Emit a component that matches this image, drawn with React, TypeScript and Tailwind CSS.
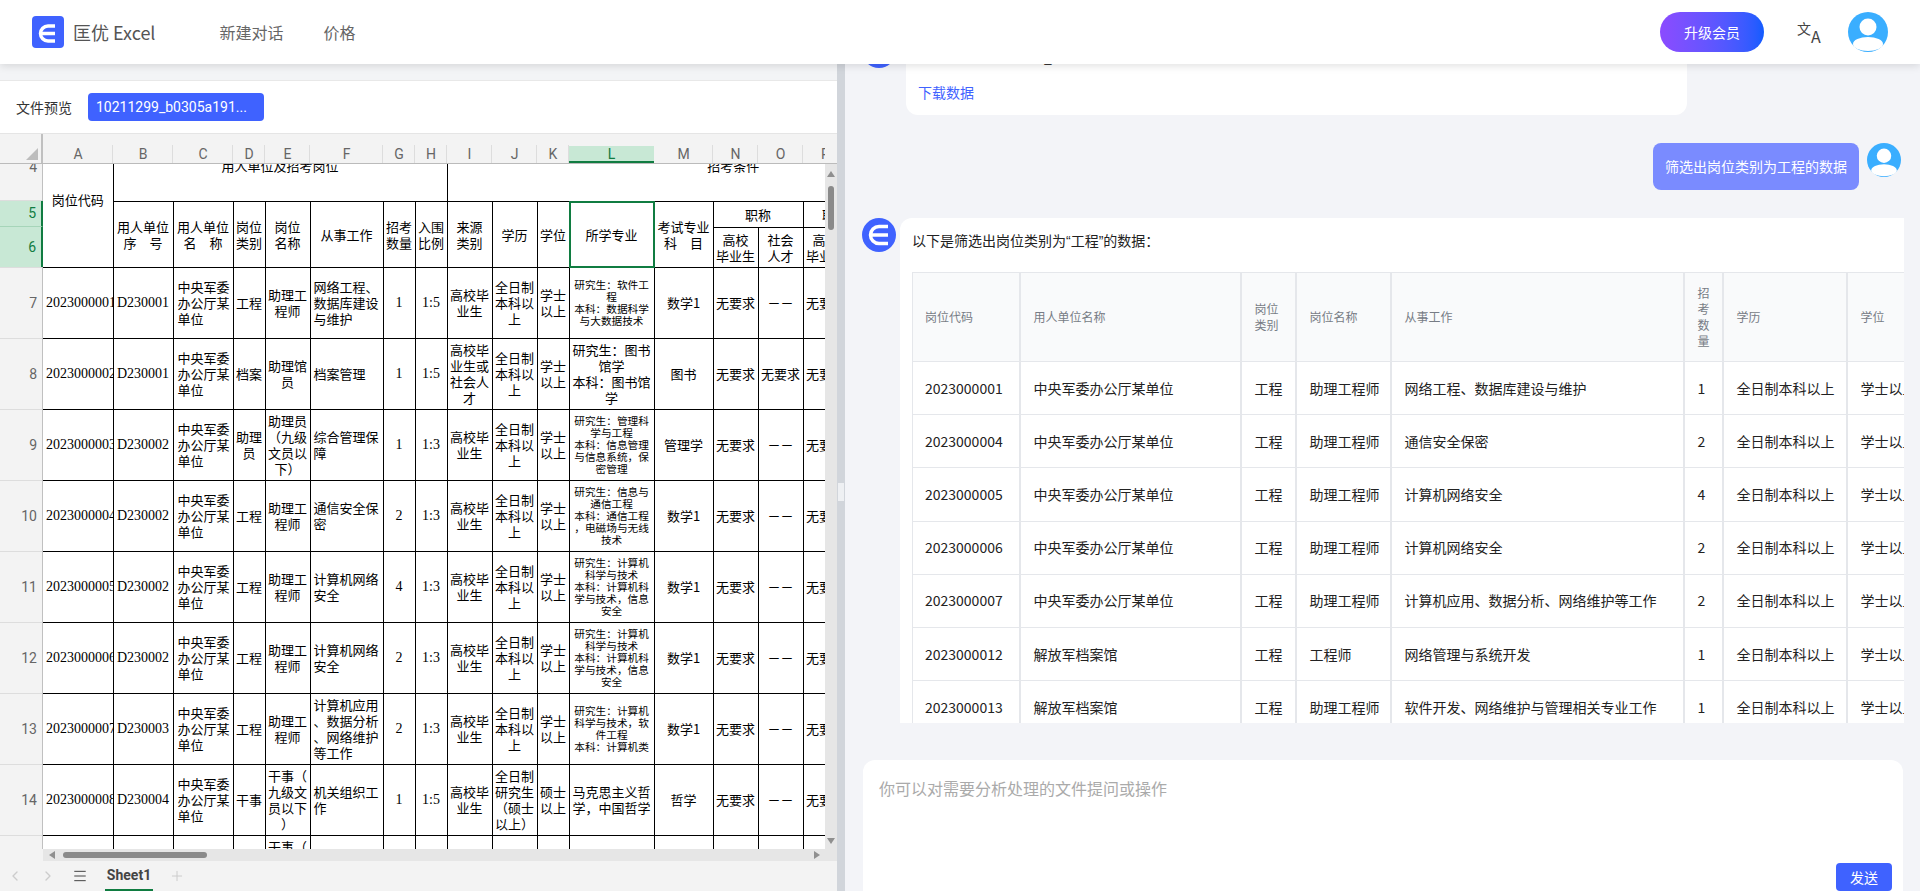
import React from 'react';
import { ChevronLeft, ChevronRight, Menu, Plus } from 'lucide-react';

const COLS = [
  { name: 'A', w: 'w-[70px]' },
  { name: 'B', w: 'w-[60px]' },
  { name: 'C', w: 'w-[60px]' },
  { name: 'D', w: 'w-[32px]' },
  { name: 'E', w: 'w-[45px]' },
  { name: 'F', w: 'w-[73px]' },
  { name: 'G', w: 'w-[32px]' },
  { name: 'H', w: 'w-[32px]' },
  { name: 'I', w: 'w-[45px]' },
  { name: 'J', w: 'w-[45px]' },
  { name: 'K', w: 'w-[32px]' },
  { name: 'L', w: 'w-[85px]' },
  { name: 'M', w: 'w-[59px]' },
  { name: 'N', w: 'w-[45px]' },
  { name: 'O', w: 'w-[45px]' },
  { name: 'P', w: 'w-[45px]' },
  { name: 'Q', w: 'w-[45px]' },
  { name: 'R', w: 'w-[126px]' },
];

const UNIT = '中央军委\n办公厅某\n单位';
const ENG = '助理工\n程师';
const FULL = '全日制\n本科以\n上';
const GRAD = '高校毕\n业生';
const BA = '学士\n以上';
const CS_MAJOR = '研究生：计算机\n科学与技术\n本科：计算机科\n学与技术，信息\n安全';

const SHEET_ROWS = [
  { no: 7, code: '2023000001', dept: 'D230001', type: '工程', title: ENG, work: '网络工程、\n数据库建设\n与维护', num: '1', ratio: '1:5', src: GRAD, edu: FULL, deg: BA, major: '研究生：软件工\n程\n本科：数据科学\n与大数据技术', small: true, exam: '数学1', other: '－－' },
  { no: 8, code: '2023000002', dept: 'D230001', type: '档案', title: '助理馆\n员', work: '档案管理', num: '1', ratio: '1:5', src: '高校毕\n业生或\n社会人\n才', edu: FULL, deg: BA, major: '研究生：图书\n馆学\n本科：图书馆\n学', small: false, exam: '图书', other: '无要求' },
  { no: 9, code: '2023000003', dept: 'D230002', type: '助理\n员', title: '助理员\n（九级\n文员以\n下）', work: '综合管理保\n障', num: '1', ratio: '1:3', src: GRAD, edu: FULL, deg: BA, major: '研究生：管理科\n学与工程\n本科：信息管理\n与信息系统，保\n密管理', small: true, exam: '管理学', other: '－－' },
  { no: 10, code: '2023000004', dept: 'D230002', type: '工程', title: ENG, work: '通信安全保\n密', num: '2', ratio: '1:3', src: GRAD, edu: FULL, deg: BA, major: '研究生：信息与\n通信工程\n本科：通信工程\n，电磁场与无线\n技术', small: true, exam: '数学1', other: '－－' },
  { no: 11, code: '2023000005', dept: 'D230002', type: '工程', title: ENG, work: '计算机网络\n安全', num: '4', ratio: '1:3', src: GRAD, edu: FULL, deg: BA, major: CS_MAJOR, small: true, exam: '数学1', other: '－－' },
  { no: 12, code: '2023000006', dept: 'D230002', type: '工程', title: ENG, work: '计算机网络\n安全', num: '2', ratio: '1:3', src: GRAD, edu: FULL, deg: BA, major: CS_MAJOR, small: true, exam: '数学1', other: '－－' },
  { no: 13, code: '2023000007', dept: 'D230003', type: '工程', title: ENG, work: '计算机应用\n、数据分析\n、网络维护\n等工作', num: '2', ratio: '1:3', src: GRAD, edu: FULL, deg: BA, major: '研究生：计算机\n科学与技术，软\n件工程\n本科：计算机类', small: true, exam: '数学1', other: '－－' },
  { no: 14, code: '2023000008', dept: 'D230004', type: '干事', title: '干事（\n九级文\n员以下\n）', work: '机关组织工\n作', num: '1', ratio: '1:5', src: GRAD, edu: '全日制\n研究生\n（硕士\n以上）', deg: '硕士\n以上', major: '马克思主义哲\n学，中国哲学', small: false, exam: '哲学', other: '－－' },
  { no: 15, code: '', dept: '', type: '', title: '干事（\n九级文\n员以下\n）', work: '', num: '', ratio: '', src: '', edu: '', deg: '', major: '', small: false, exam: '', other: '' },
];

const CHAT_ROWS = [
  ['2023000001', '中央军委办公厅某单位', '工程', '助理工程师', '网络工程、数据库建设与维护', '1'],
  ['2023000004', '中央军委办公厅某单位', '工程', '助理工程师', '通信安全保密', '2'],
  ['2023000005', '中央军委办公厅某单位', '工程', '助理工程师', '计算机网络安全', '4'],
  ['2023000006', '中央军委办公厅某单位', '工程', '助理工程师', '计算机网络安全', '2'],
  ['2023000007', '中央军委办公厅某单位', '工程', '助理工程师', '计算机应用、数据分析、网络维护等工作', '2'],
  ['2023000012', '解放军档案馆', '工程', '工程师', '网络管理与系统开发', '1'],
  ['2023000013', '解放军档案馆', '工程', '助理工程师', '软件开发、网络维护与管理相关专业工作', '1'],
];

const Avatar = ({ className }: { className: string }) => (
  <svg viewBox="0 0 40 40" className={className}>
    <circle cx="20" cy="20" r="20" fill="#3aaeff" />
    <circle cx="20" cy="15" r="8.5" fill="white" />
    <ellipse cx="20" cy="32" rx="15" ry="7" fill="white" />
  </svg>
);

const Cell = ({ children, className = '', rowSpan, colSpan }: { children?: React.ReactNode; className?: string; rowSpan?: number; colSpan?: number }) => (
  <td rowSpan={rowSpan} colSpan={colSpan} className={`border border-black p-0 px-[2px] text-center whitespace-pre-line ${className}`}>
    {children}
  </td>
);

const MONO = "font-['Liberation_Serif',serif] text-[14px]";

const SheetTable = () => (
  <table className="table-fixed border-collapse w-[976px] text-[13px] leading-4 text-black">
    <colgroup>
      {COLS.map((c) => (
        <col key={c.name} className={c.w} />
      ))}
    </colgroup>
    <tbody>
      <tr className="h-[66px]">
        <Cell rowSpan={3} className="border-l-0 pb-[4px]">岗位代码</Cell>
        <Cell colSpan={7} className="pb-[6px]">用人单位及招考岗位</Cell>
        <Cell colSpan={10} className="pb-[6px]">招考条件</Cell>
      </tr>
      <tr className="h-[26px]">
        <Cell rowSpan={2}>{'用人单位\n序　号'}</Cell>
        <Cell rowSpan={2}>{'用人单位\n名　称'}</Cell>
        <Cell rowSpan={2}>{'岗位\n类别'}</Cell>
        <Cell rowSpan={2}>{'岗位\n名称'}</Cell>
        <Cell rowSpan={2}>从事工作</Cell>
        <Cell rowSpan={2}>{'招考\n数量'}</Cell>
        <Cell rowSpan={2}>{'入围\n比例'}</Cell>
        <Cell rowSpan={2}>{'来源\n类别'}</Cell>
        <Cell rowSpan={2}>学历</Cell>
        <Cell rowSpan={2}>学位</Cell>
        <Cell rowSpan={2} className="relative">
          所学专业
          <div className="absolute inset-[-1px] border-2 border-[#107c41]" />
        </Cell>
        <Cell rowSpan={2}>{'考试专业\n科　目'}</Cell>
        <Cell colSpan={2}>职称</Cell>
        <Cell colSpan={2}>职业资格</Cell>
        <Cell rowSpan={2} />
      </tr>
      <tr className="h-[40px]">
        <Cell>{'高校\n毕业生'}</Cell>
        <Cell>{'社会\n人才'}</Cell>
        <Cell>{'高校\n毕业生'}</Cell>
        <Cell>{'社会\n人才'}</Cell>
      </tr>
      {SHEET_ROWS.map((r) => (
        <tr key={r.no} className="h-[71px]">
          <Cell className={`border-l-0 overflow-hidden whitespace-nowrap text-left pl-[3px] ${MONO}`}>{r.code}</Cell>
          <Cell className={MONO}>{r.dept}</Cell>
          <Cell className="text-left pl-[4px]">{UNIT}</Cell>
          <Cell>{r.type}</Cell>
          <Cell>{r.title}</Cell>
          <Cell className="text-left pl-[3px]">{r.work}</Cell>
          <Cell className={MONO}>{r.num}</Cell>
          <Cell className={MONO}>{r.ratio}</Cell>
          <Cell>{r.src}</Cell>
          <Cell>{r.edu}</Cell>
          <Cell>{r.deg}</Cell>
          <Cell className={r.small ? 'text-[10.67px] leading-3' : ''}>{r.major}</Cell>
          <Cell>{r.exam}</Cell>
          <Cell>{r.no === 15 ? '' : '无要求'}</Cell>
          <Cell>{r.other}</Cell>
          <Cell>{r.no === 15 ? '' : '无要求'}</Cell>
          <Cell />
          <Cell />
        </tr>
      ))}
    </tbody>
  </table>
);

const RowHeaders = () => (
  <div className="w-[43px] shrink-0 -mt-[29px] border-r border-[#c0c0c0] text-right text-[14px] text-[#666] font-['Roboto',sans-serif]">
    <div className="h-[66px] flex items-center justify-end pr-[5px] border-b border-[#ddd]">4</div>
    <div className="h-[26px] flex items-center justify-end pr-[5px] border-b border-[#a6d5b9] bg-[#c8e8d5] text-[#107c41] border-r-2 border-r-[#107c41] -mr-px">5</div>
    <div className="h-[40px] flex items-center justify-end pr-[5px] bg-[#c8e8d5] text-[#107c41] border-r-2 border-r-[#107c41] -mr-px">6</div>
    {SHEET_ROWS.map((r) => (
      <div key={r.no} className="h-[71px] flex items-center justify-end pr-[5px] border-t border-[#ddd]">
        {r.no}
      </div>
    ))}
  </div>
);

const Spreadsheet = () => (
  <div className="flex-1 min-h-0 flex flex-col bg-[#f3f3f3] border-t border-[#e5e5e5]">
    <div className="h-[30px] shrink-0 flex overflow-hidden border-b border-[#bbb] font-['Roboto',sans-serif] text-[14px] leading-[18px] text-[#666]">
      <div className="w-[43px] shrink-0 flex items-end justify-end pr-[3px] pb-[3px] border-r-2 border-[#c0c0c0]">
        <div className="w-0 h-0 border-l-[12px] border-l-transparent border-b-[12px] border-b-[#bdbdbd]" />
      </div>
      <div className="flex-1 flex overflow-hidden mr-[12px]">
        {COLS.map((c) => (
          <div
            key={c.name}
            className={`${c.w} shrink-0 flex justify-center ${
              c.name === 'L'
                ? 'items-center bg-[#c8e8d5] text-[#107c41] border-b-2 border-[#107c41] mt-[12px]'
                : 'items-end relative after:absolute after:right-0 after:bottom-0 after:h-[18px] after:w-px after:bg-[#ddd]'
            }`}
          >
            {c.name}
          </div>
        ))}
      </div>
    </div>

    <div className="flex-1 min-h-0 flex overflow-hidden">
      <RowHeaders />
      <div className="flex-1 min-w-0 overflow-hidden bg-white">
        <div className="-mt-[29px]">
          <SheetTable />
        </div>
      </div>
      <div className="w-3 shrink-0 bg-[#e6e6e6] flex flex-col items-center pt-[7px] pb-[5px]">
        <svg viewBox="0 0 8 6" className="w-2 h-[6px] shrink-0"><polygon points="4,0 8,6 0,6" fill="#8f8f8f" /></svg>
        <div className="w-[6px] h-[44px] mt-[9px] rounded-full bg-[#8a8a8a]" />
        <svg viewBox="0 0 8 6" className="w-2 h-[6px] shrink-0 mt-auto"><polygon points="0,0 8,0 4,6" fill="#8f8f8f" /></svg>
      </div>
    </div>

    <div className="h-3 shrink-0 ml-[43px] bg-[#e6e6e6] flex items-center pl-[6px] pr-[17px]">
      <svg viewBox="0 0 6 8" className="w-[6px] h-2 shrink-0"><polygon points="6,0 6,8 0,4" fill="#8f8f8f" /></svg>
      <div className="w-[144px] h-[6px] ml-[8px] rounded-full bg-[#8a8a8a]" />
      <svg viewBox="0 0 6 8" className="w-[6px] h-2 shrink-0 ml-auto"><polygon points="0,0 6,4 0,8" fill="#8f8f8f" /></svg>
    </div>

    <div className="h-[30px] shrink-0 flex items-center">
      <ChevronLeft className="w-4 h-4 ml-[7px] text-[#ccc]" />
      <ChevronRight className="w-4 h-4 ml-[17px] text-[#ccc]" />
      <Menu className="w-4 h-4 ml-[16px] text-[#444]" strokeWidth={1.5} />
      <div className="ml-[17px] w-[48px] h-full flex items-center justify-center border-b-2 border-[#107c41] font-['Roboto',sans-serif] font-bold text-[14px] text-[#444]">
        Sheet1
      </div>
      <Plus className="w-4 h-4 ml-[16px] text-[#ccc]" strokeWidth={1.5} />
    </div>
  </div>
);

const ChatTable = () => (
  <table className="table-fixed border-collapse w-[1100px] text-[14px] text-[#222]">
    <colgroup>
      <col className="w-[107px]" />
      <col className="w-[221px]" />
      <col className="w-[55px]" />
      <col className="w-[95px]" />
      <col className="w-[293px]" />
      <col className="w-[39px]" />
      <col className="w-[124px]" />
      <col className="w-[166px]" />
    </colgroup>
    <thead className="bg-[#f9fafb] text-[12px] leading-4 text-[#777c85]">
      <tr className="h-[89px]">
        {['岗位代码', '用人单位名称', '岗位\n类别', '岗位名称', '从事工作', '招\n考\n数\n量', '学历', '学位'].map((h) => (
          <th key={h} className="border-y border-x-2 first:border-l border-[#e5e7eb] pl-[13px] first:pl-3 pr-3 text-left font-normal whitespace-pre-line">
            {h}
          </th>
        ))}
      </tr>
    </thead>
    <tbody>
      {CHAT_ROWS.map((row) => (
        <tr key={row[0]} className="h-[53.2px]">
          {row.map((v, i) => (
            <td key={i} className="border-y border-x-2 first:border-l border-[#e5e7eb] pl-[13px] first:pl-3 pr-3 whitespace-nowrap">
              {v}
            </td>
          ))}
          <td className="border-y border-x-2 border-[#e5e7eb] pl-[13px] pr-3 whitespace-nowrap">全日制本科以上</td>
          <td className="border-y border-x-2 border-[#e5e7eb] pl-[13px] pr-3 whitespace-nowrap">学士以上</td>
        </tr>
      ))}
    </tbody>
  </table>
);

const BotIcon = () => (
  <div className="w-[34px] h-[34px] shrink-0 rounded-full bg-[#3f62ff]">
    <svg viewBox="0 0 34 34" className="w-[34px] h-[34px]" fill="none" stroke="white" strokeWidth="3.5">
      <path d="M26 8.5 H17 A8.5 8.5 0 0 0 17 25.5 H26" />
      <path d="M9 17 H26" />
    </svg>
  </div>
);

const Chat = () => (
  <div className="flex-1 min-w-0 flex flex-col bg-[#f3f4f8]">
    <div className="h-[659px] shrink-0 overflow-hidden pl-[17px]">
      <div className="-mt-[30px] flex flex-col gap-[28px]">
        <div className="flex items-start">
          <BotIcon />
          <div className="ml-[10px] w-[781px] h-[81px] rounded-b-xl bg-white px-3 pt-[10px] text-[14px] leading-[21px]">
            <p className="text-[#222]">
              处理后数据已保存到<span className="align-[-3px]">_</span>
            </p>
            <p className="mt-[14px] text-[#3f62ff]">下载数据</p>
          </div>
        </div>

        <div className="flex items-start justify-end pr-[19px]">
          <div className="h-[47px] rounded-lg bg-[#7a8bff] px-3 flex items-center text-[14px] text-white">
            筛选出岗位类别为工程的数据
          </div>
          <Avatar className="w-[34px] h-[34px] ml-2 shrink-0" />
        </div>

        <div className="flex items-start">
          <BotIcon />
          <div className="ml-1 w-[1004px] rounded-tl-xl bg-white overflow-hidden pl-3 pt-3">
            <p className="h-[21px] leading-[21px] text-[14px] text-[#222]">
              以下是筛选出岗位类别为<span className="font-['Liberation_Sans',sans-serif]">“</span>工程<span className="font-['Liberation_Sans',sans-serif]">”</span>的数据：
            </p>
            <div className="mt-[21px] overflow-hidden">
              <ChatTable />
            </div>
          </div>
        </div>
      </div>
    </div>

    <div className="mt-[37px] ml-[18px] w-[1040px] h-[131px] rounded-t-xl bg-white flex flex-col">
      <textarea
        placeholder="你可以对需要分析处理的文件提问或操作"
        className="flex-1 min-h-0 w-full resize-none outline-none bg-transparent px-4 pt-4 text-[16px] leading-6 placeholder:text-[#aaa]"
      />
      <button className="self-end mr-[11px] w-[56px] h-7 shrink-0 rounded bg-[#3f62ff] text-white text-[14px]">发送</button>
    </div>
  </div>
);

export default function App() {
  return (
    <div className="h-screen overflow-hidden flex flex-col font-['Noto_Sans_CJK_SC',sans-serif]">
      <header className="relative z-10 h-16 shrink-0 bg-white shadow-[0_2px_8px_rgba(0,0,0,0.12)] flex items-center pl-8 pr-8">
        <div className="w-8 h-8 rounded bg-[#3f62ff]">
          <svg viewBox="0 0 32 32" className="w-8 h-8" fill="none" stroke="white" strokeWidth="3.5">
            <path d="M23 10 H16 A7.5 7.5 0 0 0 16 25 H23" />
            <path d="M9 17.5 H23" />
          </svg>
        </div>
        <span className="ml-[9px] text-[18px] text-[#555]">匡优 Excel</span>
        <nav className="ml-16 flex gap-10 text-[16px] text-[#666]">
          <span>新建对话</span>
          <span>价格</span>
        </nav>
        <button className="ml-auto w-[104px] h-10 rounded-full bg-gradient-to-r from-[#8b4bff] to-[#0f5cff] text-white text-[14px]">
          升级会员
        </button>
        <div className="ml-[33px] w-[21px] h-[21px] flex justify-between text-[#444]">
          <span className="self-start text-[14px] leading-[13px]">文</span>
          <span className="self-end text-[16px] leading-[13px]">A</span>
        </div>
        <Avatar className="ml-[30px] w-10 h-10" />
      </header>

      <main className="flex-1 min-h-0 flex">
        <section className="w-[837px] shrink-0 pt-4 bg-[#f3f4f6] flex flex-col">
          <div className="h-[53px] shrink-0 bg-white border-t border-[#e8e8e8] flex items-center px-4">
            <span className="text-[14px] text-[#333]">文件预览</span>
            <span className="ml-4 h-7 w-[176px] rounded bg-[#3f62ff] px-2 flex items-center text-[14px] text-white font-['Roboto',sans-serif]">
              10211299_b0305a191...
            </span>
          </div>
          <Spreadsheet />
        </section>

        <div className="relative w-2 shrink-0 bg-[#d1d5db]">
          <div className="absolute top-[419px] left-px w-[6px] h-[18px] bg-[#eef0f3]" />
        </div>

        <Chat />
      </main>
    </div>
  );
}
